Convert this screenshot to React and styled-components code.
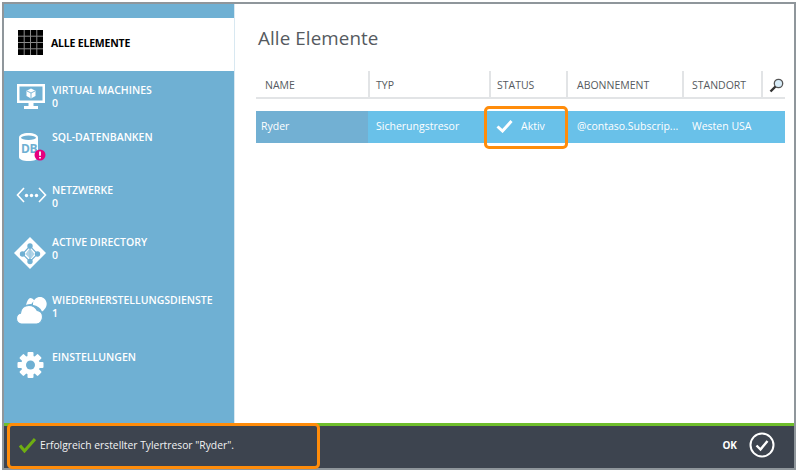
import React from "react";
import styled, { createGlobalStyle } from "styled-components";

const GlobalStyle = createGlobalStyle`
  html, body {
    margin: 0;
    padding: 0;
    background: #ffffff;
  }
  body {
    font-family: "Open Sans", "Noto Sans", "Liberation Sans", sans-serif;
  }
`;

const Page = styled.div`
  position: relative;
  width: 797px;
  height: 472px;
  box-sizing: border-box;
  padding: 2px 1px 2px 2px;
  background: #ffffff;
  overflow: hidden;
`;

const Frame = styled.div`
  display: flex;
  flex-direction: column;
  height: 100%;
  box-sizing: border-box;
  border: 2px solid #8f969b;
`;

const Main = styled.div`
  flex: 1;
  display: flex;
  min-height: 0;
`;

const Sidebar = styled.nav`
  width: 230px;
  flex: none;
  padding-top: 14px;
  background: #6fb0d3;
  border-right: 1px solid #d8e8f1;
`;

const NavItem = styled.div`
  display: flex;
  height: ${(p) => p.$height}px;
  box-sizing: border-box;
  padding-left: 13px;
  color: #ffffff;
  background: ${(p) => (p.$active ? "#ffffff" : "transparent")};
`;

const IconSlot = styled.div`
  flex: none;
  width: ${(p) => 35 - (p.$left || 0)}px;
  padding-top: ${(p) => p.$top}px;
  margin-left: ${(p) => p.$left || 0}px;
`;

const NavText = styled.div`
  padding-top: ${(p) => (p.$active ? 19 : 13)}px;
  margin-left: ${(p) => (p.$active ? -1 : 0)}px;
  font-size: 10.5px;
  line-height: 13px;
  font-weight: ${(p) => (p.$active ? 700 : 600)};
  letter-spacing: ${(p) => (p.$active ? "-0.2px" : "0")};
  white-space: nowrap;
  color: ${(p) => (p.$active ? "#000000" : "#ffffff")};
`;

const Content = styled.main`
  flex: 1;
  padding: 18px 9px 0 21px;
  background: #ffffff;
`;

const Title = styled.h1`
  margin: 0 0 17px 2px;
  font-size: 18.8px;
  line-height: 32px;
  font-weight: 400;
  letter-spacing: 0.1px;
  color: #555a60;
`;

const TableRow = styled.div`
  display: grid;
  grid-template-columns: 112px 121px 77px 116px 79px 24px;
`;

const HeaderRow = styled(TableRow)`
  height: 26px;
  border-bottom: 2px solid #e2e4e6;
  margin-bottom: 12px;
`;

const HeaderCell = styled.div`
  display: flex;
  align-items: center;
  padding-top: 2px;
  padding-left: ${(p) => p.$pad}px;
  font-size: 10.5px;
  color: #555a60;
  border-left: ${(p) => (p.$first ? "none" : "2px solid #e2e4e6")};
  box-sizing: border-box;
  white-space: nowrap;
`;

const BodyRow = styled(TableRow)`
  height: 32px;
  background: #69c1e9;
`;

const BodyCell = styled.div`
  display: flex;
  align-items: center;
  gap: 8px;
  padding-left: ${(p) => p.$pad}px;
  padding-bottom: 3px;
  font-size: 10.5px;
  color: #ffffff;
  background: ${(p) => (p.$selected ? "#72b0d3" : "transparent")};
  white-space: nowrap;
`;

const Footer = styled.footer`
  flex: none;
  height: 45px;
  box-sizing: border-box;
  display: flex;
  align-items: center;
  justify-content: space-between;
  padding: 0 19px 4px 15px;
  background: #3d444f;
  border-top: 3px solid #6fbe2c;
  color: #ffffff;
`;

const Message = styled.div`
  display: flex;
  align-items: center;
  gap: 4px;
  font-size: 10.3px;
  color: #f2f3f4;
`;

const OkButton = styled.div`
  display: flex;
  align-items: center;
  gap: 12px;
  font-size: 10px;
  font-weight: 700;
`;

const Highlight = styled.div`
  position: absolute;
  left: ${(p) => p.$x}px;
  top: ${(p) => p.$y}px;
  width: ${(p) => p.$w}px;
  height: ${(p) => p.$h}px;
  box-sizing: border-box;
  border: 3px solid #ff8c0a;
  border-radius: 5px;
  pointer-events: none;
`;

const GridIcon = () => (
  <svg width="25" height="25" viewBox="0 0 25 25" style={{ display: "block" }}>
    <rect width="25" height="25" fill="#000" />
    <path d="M6.2 0v25M12.5 0v25M18.8 0v25M0 6.2h25M0 12.5h25M0 18.8h25" stroke="#8a8a8a" strokeWidth="1" />
  </svg>
);

const VmIcon = () => (
  <svg width="28" height="25" viewBox="0 0 28 25" style={{ display: "block" }}>
    <path fillRule="evenodd" fill="#fff" d="M0 0h28v19H16.500v3H21v3H7v-3h4.500v-3H0zM2.500 2.500v14h23v-14z" />
    <path fill="#fff" d="M14 4.500l4.500 2.200v5.400L14 14.500l-4.500-2.400V6.700z" />
    <path d="M10 7l4 2 4-2M14 9v5" stroke="#6fb0d3" strokeWidth="0.9" fill="none" />
  </svg>
);

const DbIcon = () => (
  <svg width="30" height="29" viewBox="0 0 30 29" style={{ display: "block" }}>
    <path fill="#fff" d="M2 4.500C2 1.800 6 0 11.500 0S21 1.800 21 4.500V24c0 2.500-4 4-9.500 4S2 26.500 2 24z" />
    <ellipse cx="11.500" cy="4.800" rx="7.500" ry="2.200" fill="#6fb0d3" />
    <text x="4" y="19.500" fontFamily="Open Sans, sans-serif" fontSize="12" fontWeight="700" letterSpacing="-0.5" fill="#6fb0d3">DB</text>
    <circle cx="23" cy="22" r="5.500" fill="#e6007e" />
    <path d="M23 18.500v4.200M23 24v1.500" stroke="#fff" strokeWidth="1.800" />
  </svg>
);

const NetworkIcon = () => (
  <svg width="31" height="16" viewBox="0 0 31 16" style={{ display: "block" }}>
    <path d="M8 1L1.500 8 8 15M23 1l6.500 7L23 15" stroke="#fff" strokeWidth="1.600" fill="none" />
    <circle cx="10.500" cy="8.500" r="1.700" fill="#fff" />
    <circle cx="15.500" cy="8.500" r="1.700" fill="#fff" />
    <circle cx="20.500" cy="8.500" r="1.700" fill="#fff" />
  </svg>
);

const DirectoryIcon = () => (
  <svg width="32" height="32" viewBox="0 0 32 32" style={{ display: "block" }}>
    <path fill="#fff" d="M16 0l16 16-16 16L0 16z" />
    <path d="M16 9L8.500 17 16 24.500 23.500 17zM16 9v15.500" stroke="#6fb0d3" strokeWidth="1.100" fill="none" />
    <path fill="#6fb0d3" d="M15.300 12l-3.800 5 3.800 4zM16.700 12v9l.8 0 3-4z" opacity="0.55" />
    <circle cx="16" cy="9" r="2.700" fill="#6fb0d3" />
    <circle cx="8.500" cy="17" r="2.700" fill="#6fb0d3" />
    <circle cx="23.500" cy="17" r="2.700" fill="#6fb0d3" />
    <circle cx="16" cy="24.500" r="2.700" fill="#6fb0d3" />
  </svg>
);

const CloudIcon = () => (
  <svg width="31" height="30" viewBox="0 0 31 30" style={{ display: "block" }}>
    <path fill="#fff" d="M17 8.500C17.500 4.500 20.500 2 24 2c3.500 0 6 2.500 6.500 5.500.5 1.500 0 4-1 5.500-1 1.500-2.500 3-3.500 3.500-1.500-3.500-4.500-6-9-6.500z" />
    <path fill="#fff" d="M14 3c2 0 3.500 1 4.500 3-1.200.5-2.400 1.500-3 3-2 0-4 .3-5.500 1C11 6.500 12 4 14 3z" />
    <path fill="#fff" stroke="#6fb0d3" strokeWidth="1.100" d="M5.500 29C2.500 29 .5 26.500.5 23.500c0-2.500 1.500-4.700 4-5.300C5 13.500 8.500 10.500 13 10.500c3.800 0 6.800 2 8.200 5 3.300.5 5.300 3.200 5.300 6.500 0 3.800-2.500 7-6 7z" />
  </svg>
);

const GearIcon = () => (
  <svg width="27" height="26" viewBox="0 0 27 26" style={{ display: "block" }}>
    <g fill="#fff">
      <circle cx="13.500" cy="13" r="9.500" />
      {[0, 45, 90, 135, 180, 225, 270, 315].map((a) => (
        <rect key={a} x="10.500" y="0" width="6" height="5" rx="1" transform={`rotate(${a} 13.500 13)`} />
      ))}
    </g>
    <circle cx="13.500" cy="13" r="4.500" fill="#6fb0d3" />
  </svg>
);

const CheckIcon = () => (
  <svg width="17" height="14" viewBox="0 0 17 14" style={{ display: "block" }}>
    <path d="M1.500 7.500L6.500 12 15.500 2" stroke="#fff" strokeWidth="3" fill="none" />
  </svg>
);

const GreenCheckIcon = () => (
  <svg width="17" height="15" viewBox="0 0 17 15" style={{ display: "block" }}>
    <path d="M1 7.500L5.500 13 16 1" stroke="#6fae12" strokeWidth="3" fill="none" />
  </svg>
);

const OkIcon = () => (
  <svg width="26" height="26" viewBox="0 0 26 26" style={{ display: "block" }}>
    <circle cx="13" cy="13" r="11.500" stroke="#fff" strokeWidth="2" fill="none" />
    <path d="M7.500 13.500L11.500 17.500 18.500 9" stroke="#fff" strokeWidth="2.400" fill="none" />
  </svg>
);

const SearchIcon = () => (
  <svg width="15" height="15" viewBox="0 0 15 15" style={{ display: "block" }}>
    <circle cx="9.500" cy="5.500" r="4.200" fill="#d8ecf8" stroke="#555" strokeWidth="1.300" />
    <path d="M6.500 8.500L1.500 13.500" stroke="#333" strokeWidth="2.400" />
  </svg>
);

const navItems = [
  { label: "VIRTUAL MACHINES", count: "0", height: 47, top: 13, icon: <VmIcon /> },
  { label: "SQL-DATENBANKEN", height: 53, top: 15, icon: <DbIcon /> },
  { label: "NETZWERKE", count: "0", height: 52, top: 16, left: -1, icon: <NetworkIcon /> },
  { label: "ACTIVE DIRECTORY", count: "0", height: 58, top: 14, left: -3, icon: <DirectoryIcon /> },
  { label: "WIEDERHERSTELLUNGSDIENSTE", count: "1", height: 57, top: 14, left: -1, icon: <CloudIcon /> },
  { label: "EINSTELLUNGEN", height: 57, top: 14, icon: <GearIcon /> },
];

const columns = [
  { label: "NAME", pad: 9 },
  { label: "TYP", pad: 6 },
  { label: "STATUS", pad: 6 },
  { label: "ABONNEMENT", pad: 9 },
  { label: "STANDORT", pad: 8 },
];

export default function App() {
  return (
    <>
      <GlobalStyle />
      <Page>
        <Frame>
          <Main>
            <Sidebar>
              <NavItem $active $height={53}>
                <IconSlot $top={12} $left={1}>
                  <GridIcon />
                </IconSlot>
                <NavText $active>ALLE ELEMENTE</NavText>
              </NavItem>
              {navItems.map((item) => (
                <NavItem key={item.label} $height={item.height}>
                  <IconSlot $top={item.top} $left={item.left}>
                    {item.icon}
                  </IconSlot>
                  <NavText>
                    {item.label}
                    {item.count && <div>{item.count}</div>}
                  </NavText>
                </NavItem>
              ))}
            </Sidebar>
            <Content>
              <Title>Alle Elemente</Title>
              <HeaderRow>
                {columns.map((col, i) => (
                  <HeaderCell key={col.label} $first={i === 0} $pad={col.pad}>
                    {col.label}
                  </HeaderCell>
                ))}
                <HeaderCell $pad={6}>
                  <SearchIcon />
                </HeaderCell>
              </HeaderRow>
              <BodyRow>
                <BodyCell $selected $pad={5}>Ryder</BodyCell>
                <BodyCell $pad={8}>Sicherungstresor</BodyCell>
                <BodyCell $pad={7}>
                  <CheckIcon />
                  Aktiv
                </BodyCell>
                <BodyCell $pad={11}>@contaso.Subscrip...</BodyCell>
                <BodyCell $pad={10}>Westen USA</BodyCell>
                <BodyCell />
              </BodyRow>
            </Content>
          </Main>
          <Footer>
            <Message>
              <GreenCheckIcon />
              Erfolgreich erstellter Tylertresor "Ryder".
            </Message>
            <OkButton>
              OK
              <OkIcon />
            </OkButton>
          </Footer>
        </Frame>
        <Highlight $x={484} $y={106} $w={84} $h={43} />
        <Highlight $x={7} $y={423} $w={313} $h={46} />
      </Page>
    </>
  );
}
